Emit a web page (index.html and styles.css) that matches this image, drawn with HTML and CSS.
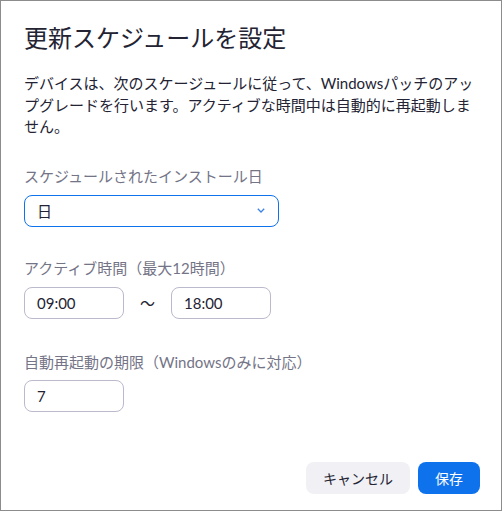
FILE: index.html
```html
<!DOCTYPE html>
<html lang="ja">
<head>
<meta charset="utf-8">
<title>更新スケジュールを設定</title>
<link rel="stylesheet" href="styles.css">
</head>
<body>
<div class="dialog">
  <h1 class="title">更新スケジュールを設定</h1>
  <p class="desc">デバイスは、次のスケージュールに従って、Windowsパッチのアップグレードを行います。アクティブな時間中は自動的に再起動しません。</p>

  <div class="field">
    <div class="label">スケジュールされたインストール日</div>
    <div class="select">
      <span>日</span>
      <svg class="chev" width="8" height="5" viewBox="0 0 8 5"><path d="M0.8 0.8 L4 4 L7.2 0.8" fill="none" stroke="#3b82e6" stroke-width="1.3"/></svg>
    </div>
  </div>

  <div class="field">
    <div class="label">アクティブ時間（最大12時間）</div>
    <div class="range">
      <div class="input">09:00</div>
      <span class="tilde">〜</span>
      <div class="input">18:00</div>
    </div>
  </div>

  <div class="field field-last">
    <div class="label">自動再起動の期限（Windowsのみに対応）</div>
    <div class="input">7</div>
  </div>

  <div class="footer">
    <button class="btn btn-cancel">キャンセル</button>
    <button class="btn btn-save">保存</button>
  </div>
</div>
</body>
</html>
```

FILE: styles.css
```css
html, body {
  margin: 0;
  padding: 0;
  background: #ffffff;
}

body {
  font-family: Lato, "Noto Sans CJK JP", sans-serif;
  color: #232333;
}

.dialog {
  box-sizing: border-box;
  width: 502px;
  height: 511px;
  border: 1px solid #8c8c8c;
  padding: 21px 21px 16px 23px;
  display: flex;
  flex-direction: column;
}

.title {
  margin: 0;
  font-size: 24px;
  line-height: 32px;
  font-weight: 400;
  color: #232333;
}

.desc {
  margin: 19px 0 0;
  font-size: 15px;
  line-height: 21.5px;
  color: #232333;
}

.field {
  margin-top: 27px;
}

.field + .field {
  margin-top: 30px;
}

.field + .field-last {
  margin-top: 32px;
}

.label {
  font-size: 15px;
  line-height: 22px;
  color: #747487;
  margin-bottom: 8px;
}

.field-last .label {
  margin-bottom: 7px;
}

.select {
  box-sizing: border-box;
  width: 255px;
  height: 32px;
  border: 1px solid #0e72ed;
  border-radius: 8px;
  padding: 0 13px 0 12px;
  display: flex;
  align-items: center;
  justify-content: space-between;
  font-size: 15px;
}

.chev {
  display: block;
}

.range {
  display: flex;
  align-items: center;
}

.input {
  box-sizing: border-box;
  width: 100px;
  height: 32px;
  border: 1px solid #babacc;
  border-radius: 8px;
  padding: 0 12px;
  display: flex;
  align-items: center;
  font-size: 15px;
  color: #232333;
}

.tilde {
  width: 47px;
  text-align: center;
  font-size: 15px;
  color: #232333;
}

.footer {
  margin-top: auto;
  display: flex;
  justify-content: flex-end;
  gap: 8px;
}

.btn {
  height: 32px;
  border: none;
  border-radius: 8px;
  padding: 0 17px;
  font-family: Lato, "Noto Sans CJK JP", sans-serif;
  font-size: 14px;
  cursor: pointer;
}

.btn-cancel {
  background: #f1f1f5;
  color: #232333;
}

.btn-save {
  background: #0e72ed;
  color: #ffffff;
}
```
